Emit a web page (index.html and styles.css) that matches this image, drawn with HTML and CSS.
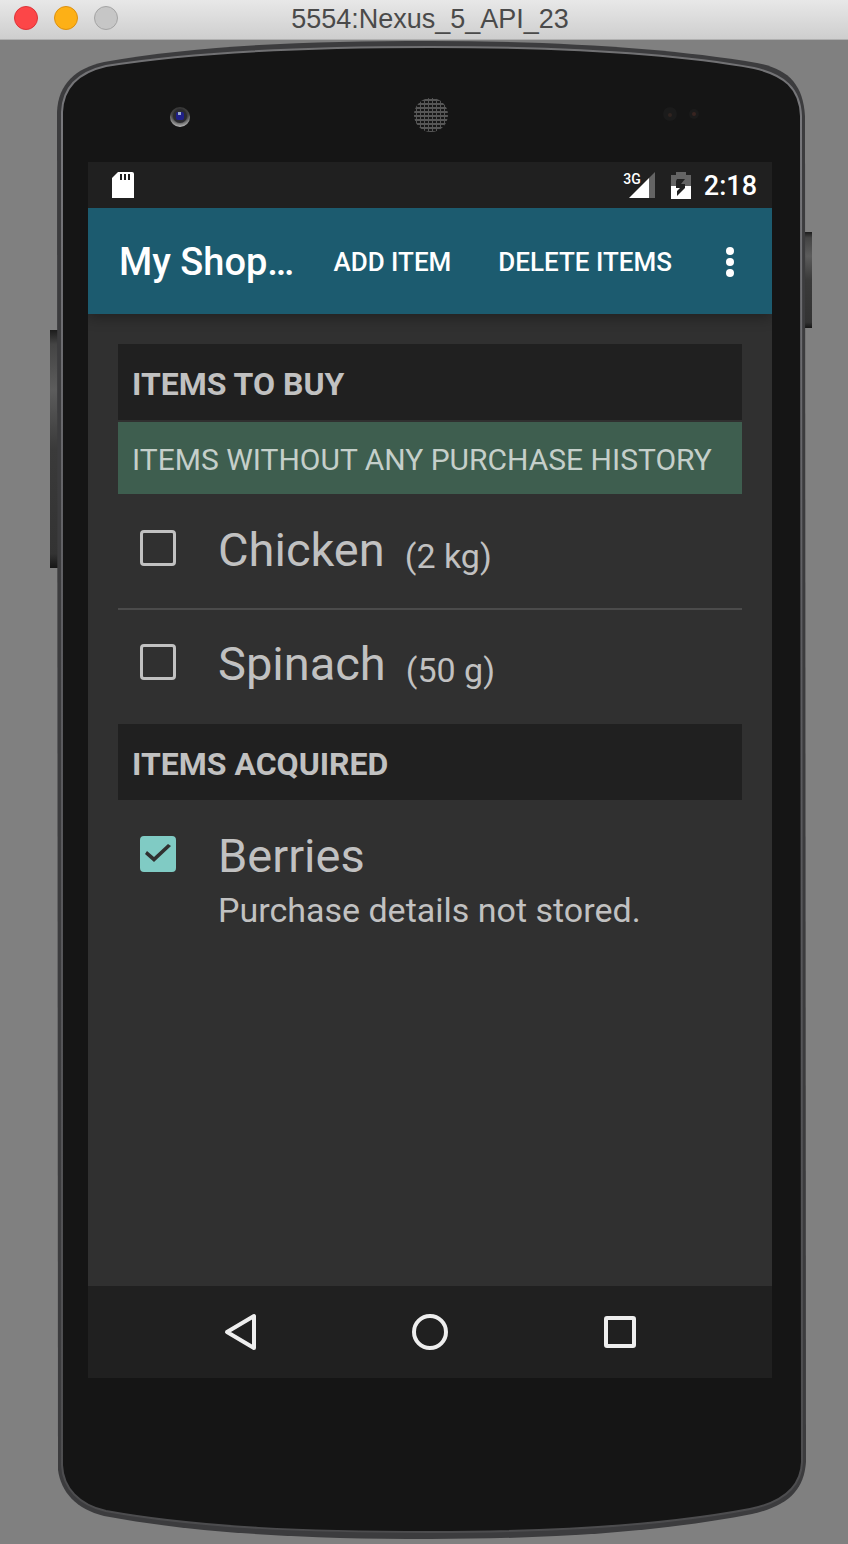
FILE: index.html
```html
<!DOCTYPE html>
<html lang="en">
<head>
<meta charset="utf-8">
<meta name="viewport" content="width=device-width, initial-scale=1">
<title>5554:Nexus_5_API_23</title>
<link rel="stylesheet" href="styles.css">
</head>
<body>
<div class="window">
  <header class="titlebar">
    <div class="lights">
      <button class="light light-close" aria-label="Close"></button>
      <button class="light light-minimize" aria-label="Minimize"></button>
      <button class="light light-zoom" aria-label="Zoom" disabled></button>
    </div>
    <h1 class="window-title">5554:Nexus_5_API_23</h1>
  </header>

  <div class="device">
    <svg class="shell" viewBox="0 40 848 1504" preserveAspectRatio="none" aria-hidden="true">
      <defs>
        <linearGradient id="key" x1="0" y1="0" x2="0" y2="1">
          <stop offset="0" stop-color="#1c1c1c"/>
          <stop offset=".06" stop-color="#444"/>
          <stop offset=".25" stop-color="#5c5c5c"/>
          <stop offset=".5" stop-color="#3a3a3a"/>
          <stop offset=".94" stop-color="#333"/>
          <stop offset="1" stop-color="#161616"/>
        </linearGradient>
        <linearGradient id="rim" x1="0" y1="0" x2="0" y2="1">
          <stop offset="0" stop-color="#707072"/>
          <stop offset=".05" stop-color="#78787c"/>
          <stop offset=".4" stop-color="#5c5c60"/>
          <stop offset="1" stop-color="#4c4c4e"/>
        </linearGradient>
        <pattern id="mesh" width="4" height="4" patternUnits="userSpaceOnUse">
          <rect width="4" height="4" fill="#565656"/>
          <rect x="1" y="1" width="3" height="2" fill="#161616"/>
        </pattern>
        <radialGradient id="lens" cx=".5" cy=".3" r=".7">
          <stop offset="0" stop-color="#222"/>
          <stop offset=".6" stop-color="#444"/>
          <stop offset="1" stop-color="#bbb"/>
        </radialGradient>
      </defs>
      <rect x="50" y="330" width="8" height="238" fill="url(#key)"/>
      <rect x="804" y="232" width="8" height="96" fill="url(#key)"/>
      <path fill="#3c3c3e" d="M57 112C58 84 76 68 104 62C200 45 310 41 430 41C550 41 670 48 757 63C788 69 803 84 805 116L806 1462C804 1490 788 1506 752 1514C660 1532 550 1539 430 1539C310 1539 200 1534 104 1516C76 1509 61 1492 58 1470Z"/>
      <path fill="#151515" stroke="url(#rim)" stroke-width="2" d="M62 112C63 86 80 72 106 66C200 51 310 47 430 47C550 47 670 53 754 68C784 75 800 88 801 116L802 1462C801 1487 784 1502 750 1509C660 1526 550 1532 430 1532C310 1532 200 1528 106 1511C79 1505 63 1488 62 1465Z"/>
      <circle cx="180" cy="117" r="10" fill="url(#lens)"/>
      <circle cx="180" cy="116" r="7" fill="#2b2b2f"/>
      <rect x="176" y="112" width="8" height="8" rx="2" fill="#202088"/>
      <rect x="178" y="112" width="3" height="3" fill="#9aaccc"/>
      <circle cx="431" cy="115" r="17" fill="url(#mesh)"/>
      <circle cx="670" cy="114" r="7" fill="#1b1b1b"/>
      <circle cx="670" cy="115" r="2" fill="#302420"/>
      <circle cx="694" cy="114" r="5" fill="#1b1b1b"/>
      <circle cx="694" cy="114" r="2" fill="#382420"/>
    </svg>

    <main class="screen">
      <div class="statusbar">
        <svg class="sd" viewBox="0 0 22 28" aria-label="SD card"><path fill="#fff" d="M6 1H20Q22 1 22 3V27H0V7Z"/><path fill="#202020" d="M8 3h2v6h-2zM12 3h2v6h-2zM16 3h2v6h-2z"/></svg>
        <div class="signal">
          <span class="network">3G</span>
          <svg class="bars" viewBox="0 0 26 26" aria-hidden="true"><path fill="#646464" d="M26 0V26H20V6Z"/><path fill="#fff" d="M0 26L20 6V26Z"/></svg>
        </div>
        <svg class="battery" viewBox="0 0 20 28" aria-label="Battery charging"><path fill="#646464" d="M5 1H15V4H20V16H0V4H5Z"/><path fill="#fff" d="M0 15H20V28H0Z"/><path fill="#202020" d="M6 8H14L10 13H14V17L6 25V20L9 17H5V10Z"/></svg>
        <time class="clock">2:18</time>
      </div>

      <div class="appbar">
        <h2 class="app-title">My Shop…</h2>
        <button class="action">ADD ITEM</button>
        <button class="action">DELETE ITEMS</button>
        <button class="overflow" aria-label="More options">
          <svg class="dots" viewBox="0 0 10 32" aria-hidden="true"><circle cx="5" cy="5" r="4"/><circle cx="5" cy="16" r="4"/><circle cx="5" cy="27" r="4"/></svg>
        </button>
      </div>

      <div class="content">
        <h3 class="section">ITEMS TO BUY</h3>
        <h4 class="subsection">ITEMS WITHOUT ANY PURCHASE HISTORY</h4>
        <ul class="items">
          <li class="item">
            <input class="tick" type="checkbox" id="chicken">
            <label class="label" for="chicken"><span class="name">Chicken</span><span class="detail">(2 kg)</span></label>
          </li>
          <li class="item">
            <input class="tick" type="checkbox" id="spinach">
            <label class="label" for="spinach"><span class="name">Spinach</span><span class="detail">(50 g)</span></label>
          </li>
        </ul>
        <h3 class="section">ITEMS ACQUIRED</h3>
        <ul class="items">
          <li class="item">
            <input class="tick" type="checkbox" id="berries" checked>
            <label class="label label-stacked" for="berries"><span class="name">Berries</span><span class="detail">Purchase details not stored.</span></label>
          </li>
        </ul>
      </div>

      <nav class="navbar">
        <button class="nav-key" aria-label="Back"><svg class="nav-icon" viewBox="0 0 40 40"><path d="M7 20L34 4V36Z"/></svg></button>
        <button class="nav-key" aria-label="Home"><svg class="nav-icon" viewBox="0 0 40 40"><circle cx="20" cy="20" r="16"/></svg></button>
        <button class="nav-key" aria-label="Overview"><svg class="nav-icon" viewBox="0 0 40 40"><rect x="6" y="6" width="28" height="28" rx="1"/></svg></button>
      </nav>
    </main>
  </div>
</div>
</body>
</html>
```
FILE: styles.css
```css
* {
  box-sizing: border-box;
}

body,
h1,
h2,
h3,
h4,
ul {
  margin: 0;
  padding: 0;
}

body {
  background: #808080;
  font-family: Roboto, "Liberation Sans", sans-serif;
}

button {
  margin: 0;
  padding: 0;
  border: 0;
  background: none;
  color: inherit;
  font: inherit;
}

.window {
  display: flex;
  flex-direction: column;
  min-height: 100vh;
}

.titlebar {
  display: grid;
  grid-template-columns: 1fr auto 1fr;
  align-items: center;
  height: 40px;
  padding: 0 2px 4px 14px;
  border-bottom: 1px solid #b0b0b0;
  background: linear-gradient(#e8e8e8, #cecece);
}

.lights {
  display: flex;
  gap: 16px;
}

.light {
  width: 24px;
  height: 24px;
  border: 1px solid #dd3338;
  border-radius: 50%;
  background: #fc4648;
}

.light-minimize {
  border-color: #dc9010;
  background: #fdb016;
}

.light-zoom {
  border-color: #a4a4a4;
  background: #c6c6c6;
}

.window-title {
  padding-top: 2px;
  color: #4a4a4a;
  font: 400 27px/32px "Liberation Sans", Arial, sans-serif;
}

.device {
  position: relative;
  display: flex;
  flex: 1;
  padding: 122px 76px 166px 88px;
}

.shell {
  position: absolute;
  inset: 0;
  width: 100%;
  height: 100%;
}

.screen {
  position: relative;
  display: flex;
  flex: 1;
  flex-direction: column;
  min-width: 0;
  background: #303030;
  color: #c1c1c1;
}

.statusbar {
  display: flex;
  align-items: center;
  height: 46px;
  padding: 0 15px 0 24px;
  background: #202020;
  color: #fff;
}

.sd {
  width: 22px;
  height: 28px;
  margin-right: auto;
}

.signal {
  display: flex;
  align-items: flex-end;
  height: 26px;
  margin-right: 16px;
}

.network {
  align-self: flex-start;
  margin-right: -12px;
  font-size: 14px;
  font-weight: 500;
  line-height: 14px;
}

.bars {
  width: 26px;
  height: 26px;
}

.battery {
  width: 20px;
  height: 28px;
  margin-right: 13px;
}

.clock {
  padding-top: 2px;
  font-size: 27px;
  font-weight: 500;
  line-height: 32px;
}

.appbar {
  z-index: 1;
  display: flex;
  align-items: center;
  height: 106px;
  padding: 2px 31px 0;
  background: #1c5b6f;
  box-shadow: 0 4px 12px rgba(0, 0, 0, 0.3);
  clip-path: inset(0 0 -24px 0);
  color: #fff;
}

.app-title {
  flex: 1;
  min-width: 0;
  font-size: 38px;
  font-weight: 500;
  line-height: 48px;
}

.action {
  margin-right: 47px;
  font-size: 26px;
  font-weight: 500;
  line-height: 32px;
}

.overflow {
  padding: 0 6px;
}

.dots {
  display: block;
  width: 10px;
  height: 32px;
  fill: #fff;
}

.content {
  flex: 1;
  padding: 30px;
}

.section {
  padding: 20px 14px 16px;
  background: #202020;
  font-size: 32px;
  font-weight: 700;
  line-height: 40px;
}

.subsection {
  margin-top: 2px;
  padding: 18px 14px 14px;
  background: #3e5e4f;
  color: #c5cfca;
  font-size: 30px;
  font-weight: 400;
  line-height: 40px;
  white-space: nowrap;
}

.items {
  list-style: none;
}

.item {
  display: flex;
  align-items: flex-start;
  min-height: 114px;
  padding: 28px 22px;
}

.item + .item {
  min-height: 116px;
  padding-top: 26px;
  border-top: 2px solid #4b4b4b;
}

.tick {
  flex: none;
  width: 36px;
  height: 36px;
  margin: 8px 42px 0 0;
  border: 3px solid #c1c1c1;
  border-radius: 4px;
  appearance: none;
}

.tick:checked {
  border-color: #80cbc4;
  background: #80cbc4;
}

.tick:checked::before {
  display: block;
  width: 30px;
  height: 30px;
  background: #303030;
  clip-path: polygon(2px 15px, 4px 12px, 11px 18px, 25px 5px, 28px 7px, 11px 23px);
  content: "";
}

.label {
  display: flex;
  align-items: flex-end;
  gap: 20px;
}

.label-stacked {
  flex-direction: column;
  align-items: flex-start;
  gap: 4px;
}

.name {
  font-size: 47px;
  line-height: 56px;
}

.detail {
  font-size: 34px;
  line-height: 44px;
}

.navbar {
  display: flex;
  justify-content: center;
  height: 92px;
  background: #202020;
}

.nav-key {
  display: grid;
  flex: 0 1 190px;
  place-items: center;
}

.nav-icon {
  width: 40px;
  height: 40px;
  fill: none;
  stroke: #eee;
  stroke-linejoin: round;
  stroke-width: 4;
}
```
